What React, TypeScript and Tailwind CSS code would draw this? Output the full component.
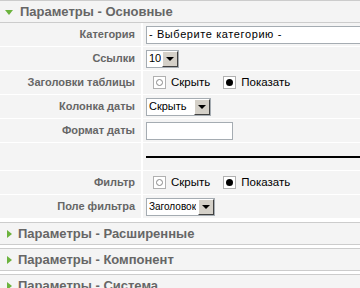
import React from "react";

const font = { fontFamily: '"Liberation Sans", Arial, sans-serif' };

function Header({ title, open }: { title: string; open?: boolean }) {
  return (
    <div className="h-[23px] border-y border-[#cccccc] bg-[#f4f4f4] flex items-center pl-[5px] gap-[7px]">
      {open ? (
        <span className="w-0 h-0 border-x-[4px] border-x-transparent border-t-[5px] border-t-[#6cb33e] mt-[1px]" />
      ) : (
        <span className="w-0 h-0 border-y-[4px] border-y-transparent border-l-[5px] border-l-[#6cb33e] ml-[2px] mr-[-1px]" />
      )}
      <span className="text-[13px] font-bold text-[#666666]">{title}</span>
    </div>
  );
}

function Arrow() {
  return (
    <span className="w-[16px] h-[16px] bg-[#d4d0c8] border border-t-white border-l-white border-r-[#404040] border-b-[#404040] flex items-center justify-center shrink-0">
      <span className="w-0 h-0 border-x-[4px] border-x-transparent border-t-[4px] border-t-black" />
    </span>
  );
}

function Select({ value, width, text = "text-[11px]" }: { value: string; width: string; text?: string }) {
  return (
    <div className={`h-[18px] ${width} shrink-0 bg-white border border-[#a5acb2] flex items-center justify-between`}>
      <span className={`${text} text-black pl-[2px] whitespace-nowrap overflow-hidden`}>{value}</span>
      <Arrow />
    </div>
  );
}

function Radio({ checked, label }: { checked?: boolean; label: string }) {
  return (
    <span className="flex items-center gap-[5px]">
      <span className="w-[13px] h-[13px] bg-white border border-[#b0b0b0] flex items-center justify-center">
        {checked ? (
          <span className="w-[7px] h-[7px] rounded-full bg-black" />
        ) : (
          <span className="w-[7px] h-[7px] rounded-full border border-[#888888]" />
        )}
      </span>
      <span className="text-[11.5px] text-black">{label}</span>
    </span>
  );
}

function Row({ label, h = "h-[24px]", children }: { label: string; h?: string; children?: React.ReactNode }) {
  return (
    <div className={`flex ${h} border-b border-white`}>
      <div className="w-[143px] shrink-0 border-r-2 border-white flex items-center justify-end pr-[6px]">
        <span className="text-[11px] font-bold text-[#666666]">{label}</span>
      </div>
      <div className="flex-1 flex items-center pl-[3px] overflow-hidden">{children}</div>
    </div>
  );
}

function Radios() {
  return (
    <div className="flex items-center gap-[13px] pl-[7px]">
      <Radio label="Скрыть" />
      <Radio checked label="Показать" />
    </div>
  );
}

export default function App() {
  return (
    <div className="w-[360px] h-[288px] bg-white overflow-hidden" style={font}>
      <Header title="Параметры - Основные" open />
      <div className="bg-[#f4f4f4]">
        <Row label="Категория">
          <div className="h-[18px] w-[230px] shrink-0 bg-white border border-[#a5acb2] flex items-center">
            <span className="text-[11px] text-black pl-[2px] tracking-[0.6px]">- Выберите категорию -</span>
          </div>
        </Row>
        <Row label="Ссылки">
          <Select value="10" width="w-[33px]" />
        </Row>
        <Row label="Заголовки таблицы">
          <Radios />
        </Row>
        <Row label="Колонка даты">
          <Select value="Скрыть" width="w-[65px]" />
        </Row>
        <Row label="Формат даты">
          <div className="h-[18px] w-[87px] bg-white border border-[#a5acb2]" />
        </Row>
        <Row label="" h="h-[28px]">
          <div className="w-full h-[2px] bg-black mt-[1px]" />
        </Row>
        <Row label="Фильтр">
          <Radios />
        </Row>
        <Row label="Поле фильтра">
          <Select value="Заголовок" width="w-[69px]" text="text-[10px]" />
        </Row>
      </div>
      <div className="h-[3px]" />
      <Header title="Параметры - Расширенные" />
      <div className="h-[3px]" />
      <Header title="Параметры - Компонент" />
      <div className="h-[3px]" />
      <Header title="Параметры - Система" />
    </div>
  );
}
